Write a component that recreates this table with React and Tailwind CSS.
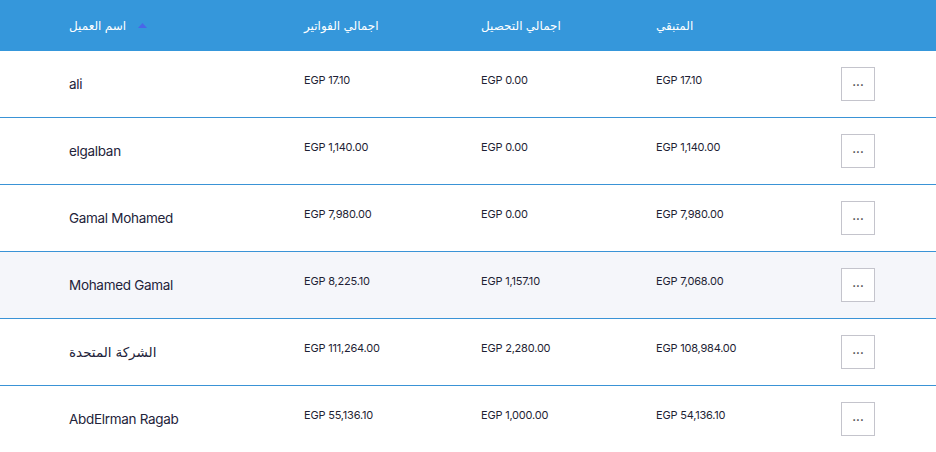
import React from "react";

const rows = [
  { name: "ali", a: "EGP 17.10", b: "EGP 0.00", c: "EGP 17.10" },
  { name: "elgalban", a: "EGP 1,140.00", b: "EGP 0.00", c: "EGP 1,140.00" },
  { name: "Gamal Mohamed", a: "EGP 7,980.00", b: "EGP 0.00", c: "EGP 7,980.00" },
  { name: "Mohamed Gamal", a: "EGP 8,225.10", b: "EGP 1,157.10", c: "EGP 7,068.00", hl: true },
  { name: "الشركة المتحدة", a: "EGP 111,264.00", b: "EGP 2,280.00", c: "EGP 108,984.00" },
  { name: "AbdElrman Ragab", a: "EGP 55,136.10", b: "EGP 1,000.00", c: "EGP 54,136.10" },
];

const grid = "grid grid-cols-[235px_177px_175px_185px_1fr] pl-[69px] items-center";

export default function App() {
  return (
    <div className="w-[936px] h-[452px] overflow-hidden bg-white" style={{ fontFamily: "Inter, 'DejaVu Sans', sans-serif" }}>
      <div className={`${grid} h-[51px] bg-[#3597db] text-white text-[12px]`}>
        <div className="flex items-center gap-[12px]">
          <span>اسم العميل</span>
          <svg width="9" height="5" viewBox="0 0 9 5"><path d="M0 5 L4.5 0 L9 5 Z" fill="#4a66e8" /></svg>
        </div>
        <div>اجمالي الفواتير</div>
        <div>اجمالي التحصيل</div>
        <div>المتبقي</div>
        <div />
      </div>
      {rows.map((r, i) => (
        <div key={i} className={`${grid} h-[67px] border-b border-[#3a93d6] ${r.hl ? "bg-[#f5f6fa]" : "bg-white"}`}>
          <div className="text-[13.5px] text-[#23233a] tracking-[-0.3px]">{r.name}</div>
          <div className="text-[11px] text-[#1f1f35] -mt-[8px] tracking-[-0.2px]">{r.a}</div>
          <div className="text-[11px] text-[#1f1f35] -mt-[8px] tracking-[-0.2px]">{r.b}</div>
          <div className="text-[11px] text-[#1f1f35] -mt-[8px] tracking-[-0.2px]">{r.c}</div>
          <div>
            <button className="w-[34px] h-[34px] border border-[#c4c4cc] bg-white flex items-center justify-center text-[#444] font-semibold text-[12px] leading-none pb-[4px]">
              ...
            </button>
          </div>
        </div>
      ))}
    </div>
  );
}
